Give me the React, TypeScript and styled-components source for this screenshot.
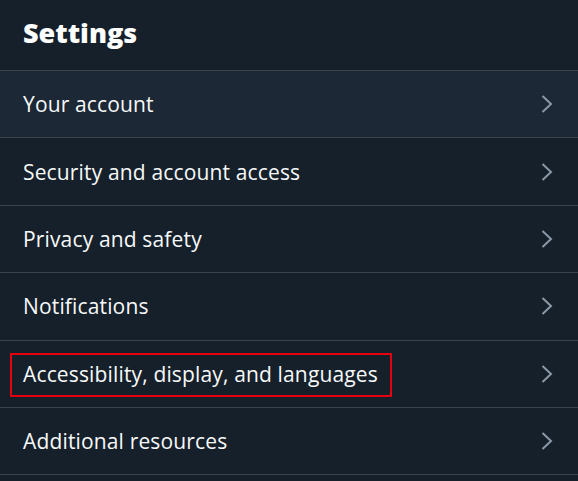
import React from "react";
import styled, { createGlobalStyle } from "styled-components";

const Global = createGlobalStyle`
  html, body { margin: 0; padding: 0; background: #15202b; }
  body { font-family: "Open Sans", "Noto Sans", sans-serif; }
`;

const Panel = styled.div`
  width: 578px;
  height: 481px;
  background: #15202b;
  overflow: hidden;
  display: flex;
  flex-direction: column;
`;

const Header = styled.div`
  height: 71px;
  flex-shrink: 0;
  display: flex;
  align-items: center;
  padding: 0 23px;
  box-sizing: border-box;
  border-bottom: 1px solid #38444d;
`;

const Title = styled.h1`
  margin: 0 0 6px 0;
  font-family: "Open Sans", sans-serif;
  font-weight: 800;
  font-size: 27px;
  color: #ffffff;
  letter-spacing: 0;
`;

const Row = styled.div<{ $active?: boolean }>`
  height: 67.4px;
  flex-shrink: 0;
  box-sizing: border-box;
  border-bottom: 1px solid #38444d;
  background: ${(p) => (p.$active ? "#1c2836" : "#15202b")};
  display: flex;
  align-items: center;
  justify-content: space-between;
  padding: 0 24px 0 23px;
`;

const Label = styled.span<{ $boxed?: boolean }>`
  font-family: "Open Sans", sans-serif;
  font-size: 21px;
  color: #f7f9f9;
  letter-spacing: 0.15px;
  position: relative;
  &::after {
    content: "";
    display: ${(p) => (p.$boxed ? "block" : "none")};
    position: absolute;
    left: -13px;
    right: -14px;
    top: -7px;
    bottom: -9px;
    border: 2px solid #e4000f;
  }
`;

const Chevron = () => (
  <svg width="14" height="20" viewBox="0 0 14 20" fill="none">
    <path d="M2.5 2 L11 10 L2.5 18" stroke="#8b98a5" strokeWidth="2" />
  </svg>
);

const items = [
  "Your account",
  "Security and account access",
  "Privacy and safety",
  "Notifications",
  "Accessibility, display, and languages",
  "Additional resources",
];

export default function App() {
  return (
    <Panel>
      <Global />
      <Header>
        <Title>Settings</Title>
      </Header>
      {items.map((t, i) => (
        <Row key={t} $active={i === 0}>
          <Label $boxed={i === 4}>{t}</Label>
          <Chevron />
        </Row>
      ))}
    </Panel>
  );
}
